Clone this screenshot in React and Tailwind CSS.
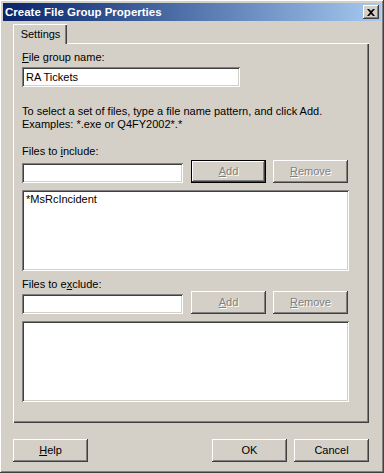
import React from 'react';

const raised = 'shadow-[inset_-1px_-1px_#404040,inset_1px_1px_#ffffff,inset_-2px_-2px_#808080,inset_2px_2px_#d4d0c8]';
const sunken = 'shadow-[inset_1px_1px_#808080,inset_-1px_-1px_#ffffff,inset_2px_2px_#404040,inset_-2px_-2px_#d4d0c8]';

function Key({ children }) {
    return <span className="underline underline-offset-[1px]">{children}</span>;
}

function Button({ children, disabled, isDefault, className = '' }) {
    const text = disabled ? 'text-[#808080] [text-shadow:1px_1px_0_#ffffff]' : 'text-black';
    if (isDefault) {
        return (
            <div className={`w-[75px] h-[23px] border border-black bg-[#d4d0c8] ${className}`}>
                <div className={`w-full h-full flex items-center justify-center ${raised} ${text}`}>{children}</div>
            </div>
        );
    }
    return (
        <div className={`w-[75px] h-[23px] flex items-center justify-center bg-[#d4d0c8] ${raised} ${text} ${className}`}>
            {children}
        </div>
    );
}

function TextBox({ value, className = '' }) {
    return (
        <div className={`h-[20px] bg-white ${sunken} pl-[4px] flex items-center ${className}`}>
            {value}
        </div>
    );
}

function ListBox({ items }) {
    return (
        <div className={`w-[327px] h-[81px] bg-white ${sunken} pl-[4px] pt-[3px]`}>
            {items.map(item => <div key={item} className="leading-[13px]">{item}</div>)}
        </div>
    );
}

function FileRow({ defaultAdd }) {
    return (
        <div className="flex items-start">
            <TextBox className="w-[161px] mt-[3px]" />
            <Button disabled isDefault={defaultAdd} className="ml-[8px]">
                <span><Key>A</Key>dd</span>
            </Button>
            <Button disabled className="ml-[7px]">
                <span><Key>R</Key>emove</span>
            </Button>
        </div>
    );
}

export default function App() {
    return (
        <div className={`w-[384px] h-[473px] bg-[#d4d0c8] p-[3px] flex flex-col text-[11px] leading-[13px] text-black ${raised}`} style={{ fontFamily: '"Liberation Sans", Arial, sans-serif' }}>
            {/* Title bar */}
            <div className="h-[18px] flex items-center justify-between pl-[2px] pr-[2px] bg-linear-to-r from-[#0a246a] to-[#a6caf0]">
                <span className="text-white font-bold text-[11.5px]">Create File Group Properties</span>
                <div className={`w-[16px] h-[14px] bg-[#d4d0c8] flex items-center justify-center ${raised}`}>
                    <svg width="8" height="7" viewBox="0 0 8 7">
                        <path d="M0 0h2l2 2 2-2h2L5 3.5 8 7H6L4 5 2 7H0l3-3.5z" fill="#000" />
                    </svg>
                </div>
            </div>

            <div className="pl-[10px] flex flex-col">
                {/* Tabs */}
                <div className="flex mt-[3px] relative z-10 -mb-px">
                    <div className="w-[54px] h-[20px] bg-[#d4d0c8] border-t border-l border-white shadow-[inset_-1px_0_#404040,inset_-2px_0_#808080] flex items-center justify-center pb-[1px]">
                        Settings
                    </div>
                </div>

                {/* Panel */}
                <div className="w-[356px] h-[380px] shadow-[inset_1px_1px_#ffffff,inset_-1px_-1px_#404040,inset_-2px_-2px_#808080] pl-[9px] pt-[8px] flex flex-col">
                    <div><Key>F</Key>ile group name:</div>
                    <TextBox value="RA Tickets" className="w-[218px] mt-[3px]" />

                    <div className="mt-[18px]">To select a set of files, type a file name pattern, and click Add.</div>
                    <div>Examples: *.exe or Q4FY2002*.*</div>

                    <div className="mt-[14px]">Files to <Key>i</Key>nclude:</div>
                    <div className="mt-[2px]"><FileRow defaultAdd /></div>
                    <div className="mt-[7px]"><ListBox items={['*MsRcIncident']} /></div>

                    <div className="mt-[7px]">Files to e<Key>x</Key>clude:</div>
                    <div><FileRow /></div>
                    <div className="mt-[7px]"><ListBox items={[]} /></div>
                </div>

                {/* Footer */}
                <div className="flex mt-[16px] w-[356px]">
                    <Button><span><Key>H</Key>elp</span></Button>
                    <div className="flex-1" />
                    <Button>OK</Button>
                    <Button className="ml-[7px]">Cancel</Button>
                </div>
            </div>
        </div>
    );
}
